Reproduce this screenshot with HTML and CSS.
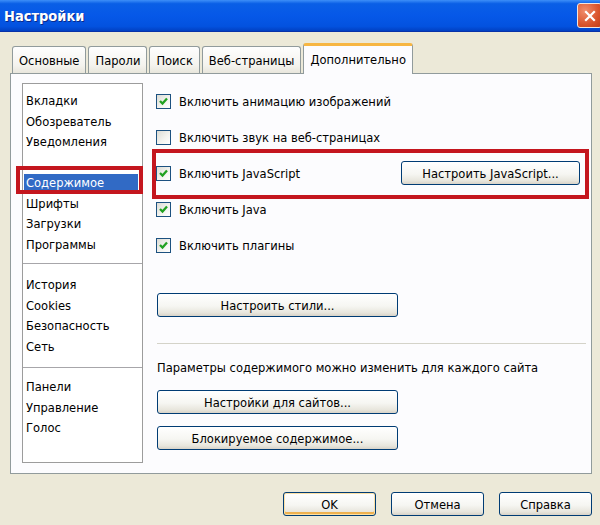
FILE: index.html
```html
<!doctype html>
<html lang="ru">
  <head>
    <meta charset="UTF-8" />
    <title>Настройки</title>
    <link rel="stylesheet" href="styles.css">
  </head>
  <body>
    <div class="titlebar">
      <span class="title">Настройки</span>
      <span class="close">
        <svg width="12" height="12" viewBox="0 0 12 12">
          <path d="M2 2 L10 10 M10 2 L2 10" stroke="#fff" stroke-width="2.2" stroke-linecap="square" />
        </svg>
      </span>
    </div>

    <div class="dialog">
      <div class="tabs">
        <div class="tab">Основные</div>
        <div class="tab">Пароли</div>
        <div class="tab">Поиск</div>
        <div class="tab">Веб-страницы</div>
        <div class="tab active">Дополнительно</div>
      </div>

      <div class="panel">
        <ul class="sections">
          <li>Вкладки</li>
          <li>Обозреватель</li>
          <li>Уведомления</li>
          <li></li>
          <li class="selected">Содержимое<span class="mark mark-item"></span></li>
          <li>Шрифты</li>
          <li>Загрузки</li>
          <li>Программы</li>
          <li class="sep sep-1"></li>
          <li>История</li>
          <li>Cookies</li>
          <li>Безопасность</li>
          <li>Сеть</li>
          <li class="sep sep-2"></li>
          <li>Панели</li>
          <li>Управление</li>
          <li>Голос</li>
        </ul>

        <div class="content">
          <label class="option">
            <span class="checkbox checked"></span>
            Включить анимацию изображений
          </label>
          <label class="option">
            <span class="checkbox"></span>
            Включить звук на веб-страницах
          </label>
          <div class="option js-row">
            <span class="checkbox checked"></span>
            Включить JavaScript
            <button class="btn btn-js">Настроить JavaScript...</button>
            <span class="mark mark-row"></span>
          </div>
          <label class="option">
            <span class="checkbox checked"></span>
            Включить Java
          </label>
          <label class="option">
            <span class="checkbox checked"></span>
            Включить плагины
          </label>

          <button class="btn btn-wide btn-styles">Настроить стили...</button>
          <div class="divider"></div>
          <p class="note">Параметры содержимого можно изменить для каждого сайта</p>
          <button class="btn btn-wide btn-sites">Настройки для сайтов...</button>
          <button class="btn btn-wide btn-blocked">Блокируемое содержимое...</button>
        </div>
      </div>

      <div class="footer">
        <button class="btn btn-default">OK</button>
        <button class="btn">Отмена</button>
        <button class="btn">Справка</button>
      </div>
    </div>
  </body>
</html>
```

FILE: styles.css
```css
body {
  margin: 0;
  width: 600px;
  height: 525px;
  overflow: hidden;
  background: #ece9d8;
  font-family: "DejaVu Sans Condensed", "DejaVu Sans", sans-serif;
  font-stretch: semi-condensed;
  font-size: 12.8px;
  color: #000;
}

.titlebar {
  height: 31px;
  border-bottom: 1px solid #0831a8;
  display: flex;
  align-items: center;
  justify-content: space-between;
  padding-left: 4px;
  background: linear-gradient(#3d8ff8, #0a5fe6 12%, #0658e8 50%, #0352df 85%, #0140c2);
}

.title {
  color: #fff;
  font-weight: bold;
  font-size: 14.5px;
  text-shadow: 1px 1px 0 #0a2a8a;
}

.close {
  width: 23px;
  height: 23px;
  margin-right: -2px;
  border: 1px solid #f2e4dc;
  border-radius: 3px;
  display: flex;
  align-items: center;
  justify-content: center;
  background: radial-gradient(circle at 30% 30%, #f08d6c, #d9542c 60%, #c03c18);
}

.dialog {
  padding: 11px 8px 0 10px;
}

.tabs {
  display: flex;
  align-items: flex-end;
  height: 31px;
  padding-left: 2px;
  margin-bottom: -1px;
  position: relative;
  z-index: 1;
}

.tab {
  height: 26px;
  line-height: 28px;
  padding: 0 6px;
  margin-right: 2px;
  margin-bottom: 1px;
  border: 1px solid #919b9c;
  border-bottom: none;
  border-radius: 3px 3px 0 0;
  background: linear-gradient(#fefefe, #f4f3ee 70%, #e8e6dc);
}

.tab.active {
  height: 28px;
  line-height: 28px;
  margin-bottom: 0;
  padding: 0 6px;
  border-top: 3px solid #f7b642;
  background: #fcfcfe;
}

.panel {
  height: 390px;
  display: flex;
  padding: 9px 11px 0 11px;
  border: 1px solid #919b9c;
  background: #fcfcfe;
}

.sections {
  list-style: none;
  margin: 0;
  padding: 7px 0;
  width: 119px;
  height: 364px;
  flex-shrink: 0;
  border: 1px solid #9c9c9c;
  background: #fff;
}

.sections li {
  height: 20.5px;
  line-height: 20.5px;
  padding-left: 3px;
  white-space: nowrap;
}

.sections li.selected {
  position: relative;
  height: 18px;
  line-height: 18px;
  margin: 1px 4px 1.5px 1px;
  padding-left: 2px;
  background: #316ac5;
  color: #fff;
}

.sections li.sep {
  height: 1px;
  padding: 0;
  background: #a7a6aa;
}

.sections li.sep-1 {
  margin: 8px 0 11px;
}

.sections li.sep-2 {
  margin: 10px 0 9px;
}

/* red annotation frames */
.mark {
  position: absolute;
  border: 4px solid #c4161e;
  pointer-events: none;
}

.mark-item {
  left: -8px;
  top: -8px;
  right: -5px;
  bottom: -2px;
}

.mark-row {
  left: -4px;
  top: -6px;
  right: -9px;
  bottom: -8px;
}

.content {
  flex-grow: 1;
  margin-left: 13px;
  display: flex;
  flex-direction: column;
  align-items: flex-start;
}

.option {
  height: 36px;
  display: flex;
  align-items: center;
  gap: 8px;
  align-self: stretch;
  white-space: nowrap;
}

.js-row {
  position: relative;
}

.checkbox {
  width: 13px;
  height: 13px;
  flex-shrink: 0;
  border: 1px solid #1c5180;
  background: linear-gradient(135deg, #dcdcd5, #f4f4f0 60%, #fff);
}

.checkbox.checked {
  background:
    url("data:image/svg+xml,%3Csvg xmlns='http://www.w3.org/2000/svg' width='13' height='13'%3E%3Cpath d='M3 6 L5.5 8.5 L10 3.5' fill='none' stroke='%2321a121' stroke-width='2.3'/%3E%3C/svg%3E") center no-repeat,
    linear-gradient(135deg, #dcdcd5, #f4f4f0 60%, #fff);
}

.btn {
  height: 24px;
  padding: 0;
  border: 1px solid #003c74;
  border-radius: 3px;
  background: linear-gradient(#fff, #f6f6f2 55%, #e8e6dd 85%, #d8d3c8);
  font: inherit;
  color: #000;
  width: 93px;
}

.btn-js {
  width: 179px;
  margin-left: auto;
}

.btn-wide {
  width: 241px;
  margin-left: 1px;
}

.btn-styles {
  margin-top: 30px;
}

.divider {
  align-self: stretch;
  height: 1px;
  margin: 26px -6px 0 1px;
  background: #d4d3c9;
}

.note {
  margin: 16px 0 0 1px;
  line-height: 16px;
  white-space: nowrap;
}

.btn-sites {
  margin-top: 14px;
}

.btn-blocked {
  margin-top: 12px;
}

.footer {
  display: flex;
  justify-content: flex-end;
  gap: 15px;
  margin-top: 18px;
}

.btn-default {
  box-shadow: inset 0 0 0 1px #fbe0a6, inset 0 -2px 0 1px #eeb14f;
}
```
